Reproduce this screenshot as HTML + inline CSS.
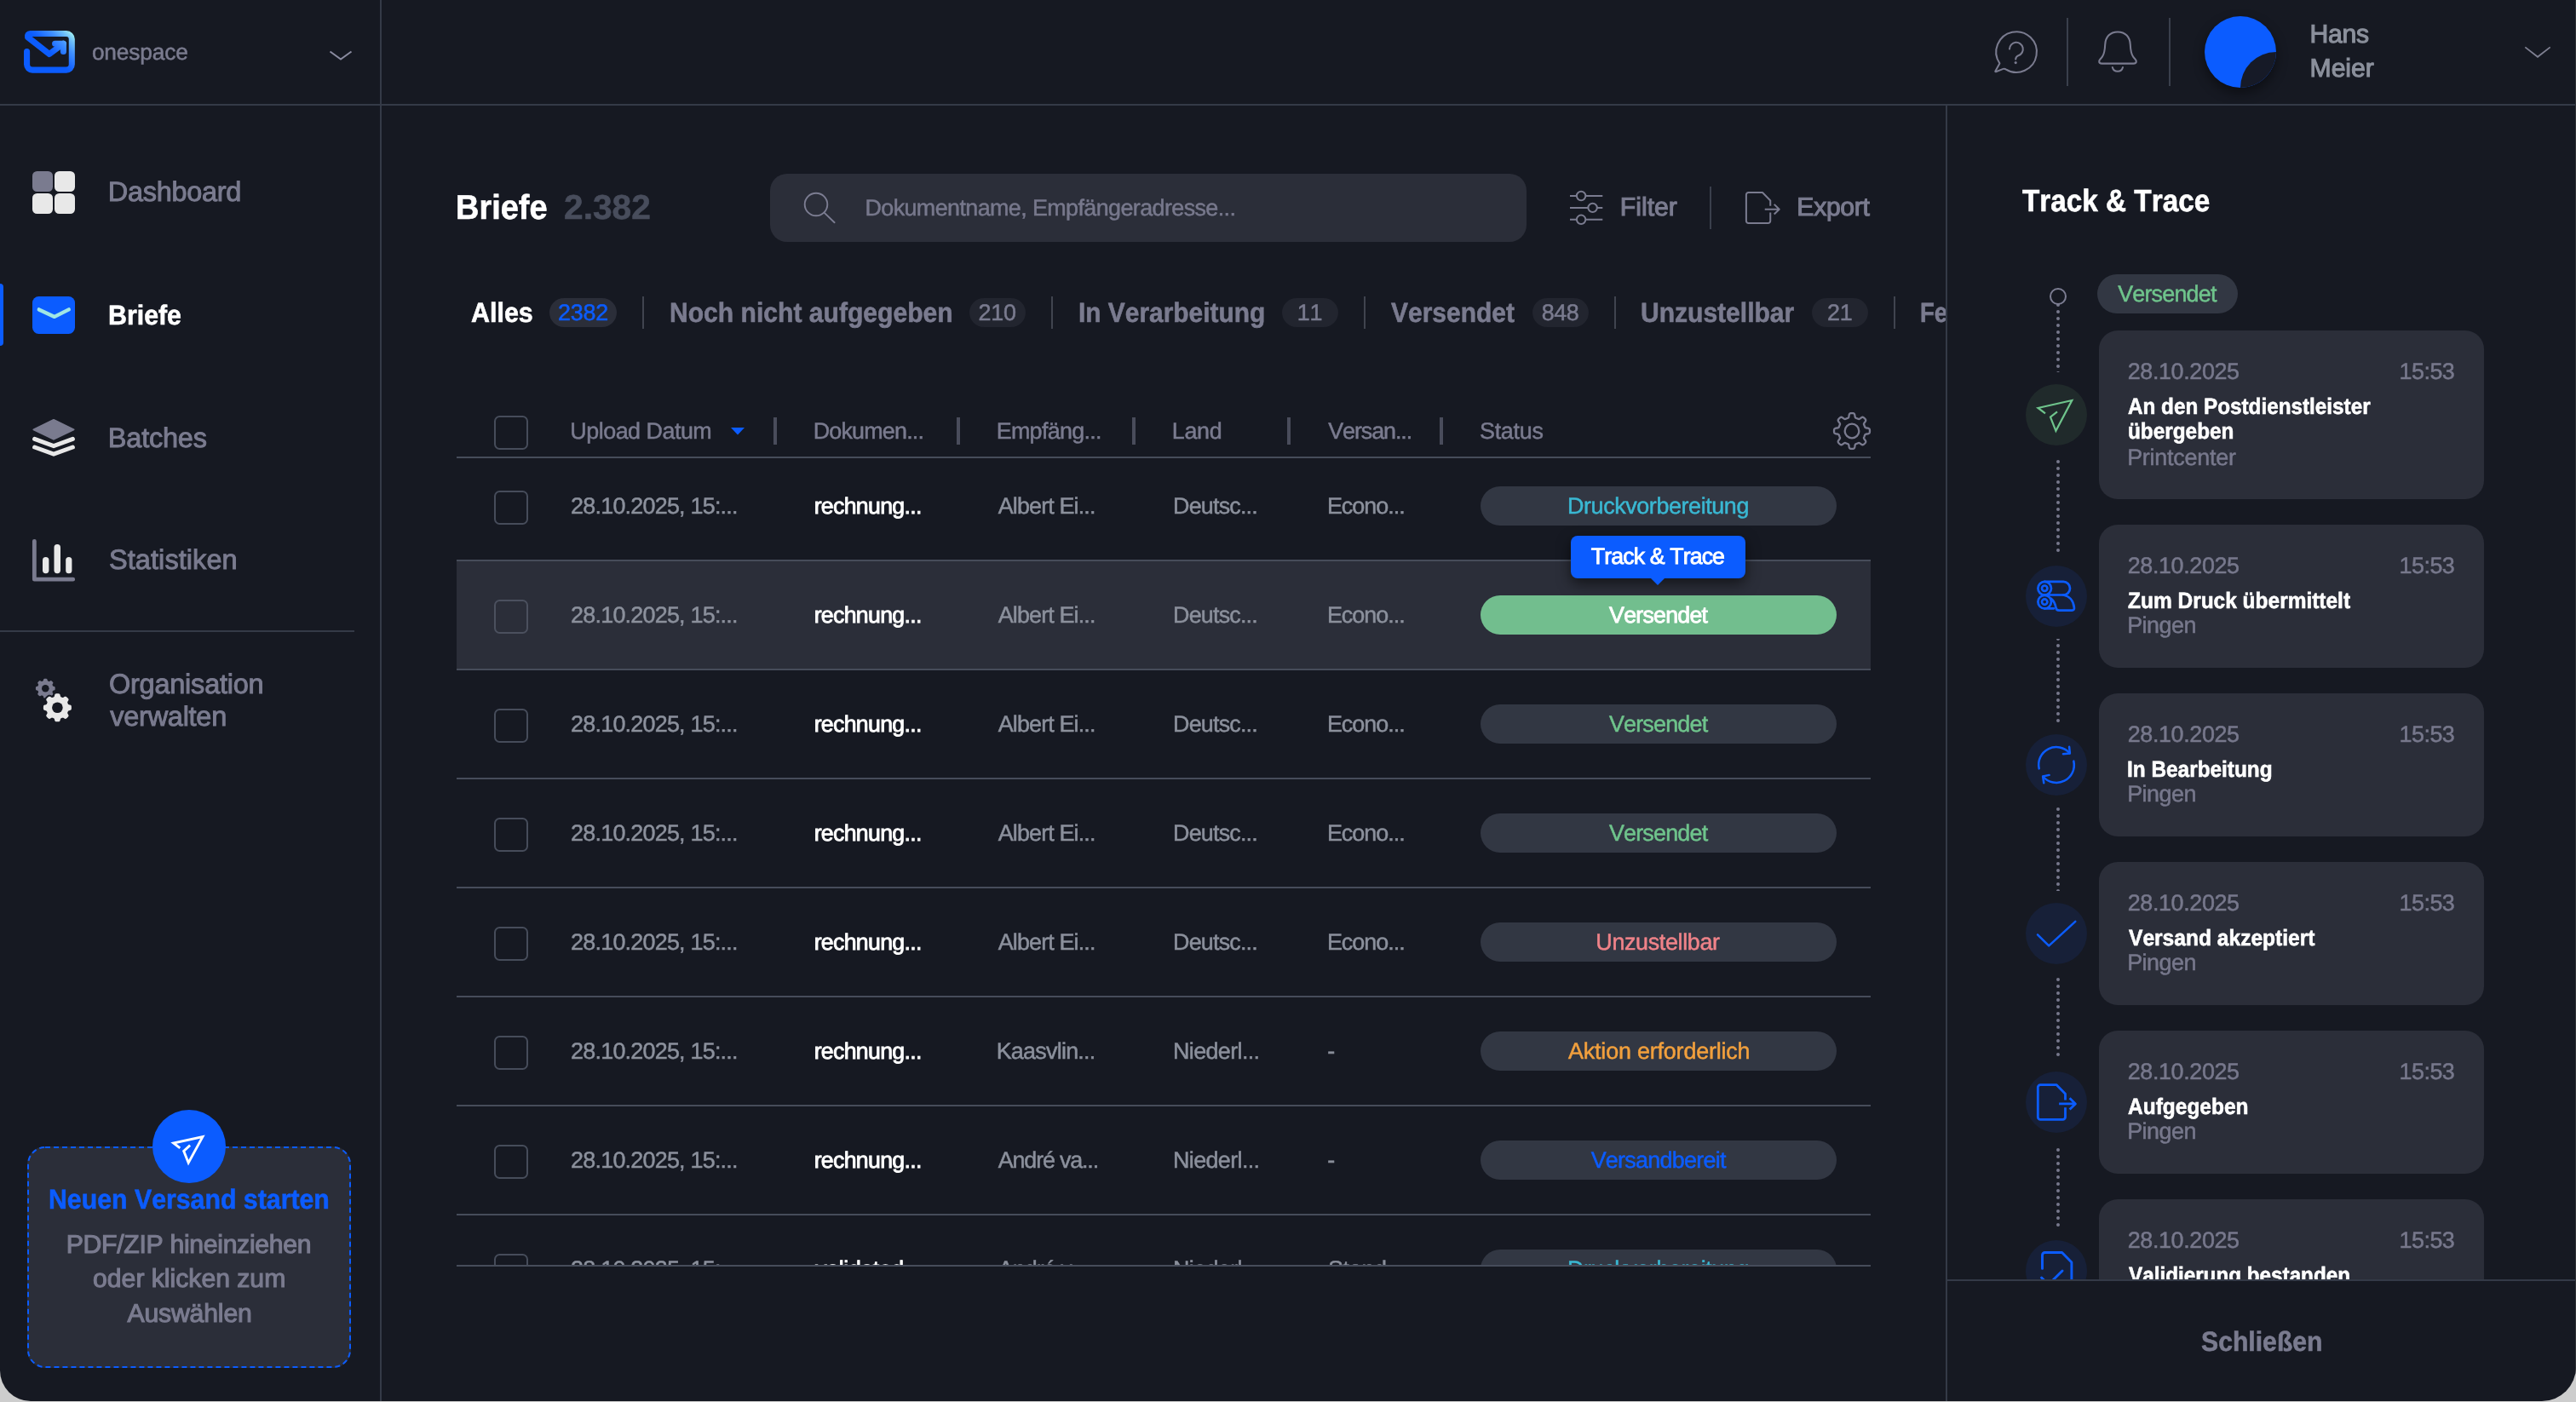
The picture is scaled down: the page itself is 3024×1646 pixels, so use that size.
<!DOCTYPE html>
<html lang="de"><head><meta charset="utf-8"><title>Briefe – Track &amp; Trace</title><style>
*{box-sizing:border-box;margin:0;padding:0}
html,body{width:3024px;height:1646px;overflow:hidden;background:#cdcdcd}
body{font-family:"Liberation Sans",sans-serif;font-kerning:none;text-rendering:geometricPrecision;-webkit-font-smoothing:antialiased}
div,span,svg,aside,header,main,section,nav,footer,ul,li,p,h1,h2,a,button{position:absolute;display:block}
.t{white-space:nowrap;line-height:1;font-weight:400;transform-origin:0 0}
.s5{-webkit-text-stroke:0.5px currentColor}
.s11{-webkit-text-stroke:1.1px currentColor}
.s9{-webkit-text-stroke:0.95px currentColor}
.b{font-weight:700;-webkit-text-stroke:0.6px currentColor}
.m{-webkit-text-stroke:0.85px currentColor}
svg{overflow:visible;fill:none}
.win{left:0;top:0;width:3024px;height:1645px;background:#161922;border-radius:0 0 40px 36px;overflow:hidden;will-change:transform}
.cb{border:2px solid #464c5a;border-radius:6.5px;width:40px;height:40px}
.pill{border-radius:23px;background:#323743;width:418px;height:46px}
.bdg{border-radius:17px;height:34px;top:350px;background:#22252f}
.vd{width:2px;background:#40444f}
.cd{width:4px;height:32px;top:490px;background:#494c5b}
.rl{left:0;width:1660px;height:2px;background:#464c5a}
.card{left:2464px;width:452px;border-radius:22px;background:#2b2e39}
.ic{width:72px;height:72px;border-radius:50%;left:2378px;background:#172038}
.mask{left:2404px;width:24px;height:100px;background:#161922}
</style></head>
<body><div class="win"><aside style="left:0;top:0;width:446px;height:1645px"><svg style="left:28px;top:36px" width="60" height="50" viewBox="0 0 60 50" ><defs><linearGradient id="lg" gradientUnits="userSpaceOnUse" x1="20" y1="36" x2="56.25" y2="-0.25"><stop offset="0.29" stop-color="#0b5cff"/><stop offset="0.39" stop-color="#1766ff"/><stop offset="0.65" stop-color="#4292ff"/><stop offset="0.83" stop-color="#6fc0f8"/><stop offset="0.95" stop-color="#9ae8f2"/></linearGradient></defs><g stroke="url(#lg)" stroke-width="7.1" stroke-linecap="round" stroke-linejoin="round"><path d="M3.55 24.5V39.6A6.5 6.5 0 0 0 10.05 46.1H49.8A6.5 6.5 0 0 0 56.3 39.6V10A6.5 6.5 0 0 0 49.8 3.5H7.6Q4 3.6 4.6 7.6L29.9 27.5L46.4 15.2"/><path d="M36.6 15.2H46.4V24.4"/></g></svg><span class="t s5" style="left:107.9px;top:48px;font-size:26.3px;color:#7a7b8f;letter-spacing:-0.16px">onespace</span><svg style="left:387px;top:60px" width="26" height="10" viewBox="0 0 26 10" ><path d="M0.5 0.5L13 9.5L25.5 0.5" stroke="#8a8ba0" stroke-width="2"/></svg><svg style="left:38px;top:201px" width="50" height="50" viewBox="0 0 50 50" ><rect width="24" height="24" rx="5.5" fill="#7a7b8f"/><rect x="26" width="24" height="24" rx="5.5" fill="#e8e8e8"/><rect y="26" width="24" height="24" rx="5.5" fill="#e8e8e8"/><rect x="26" y="26" width="24" height="24" rx="5.5" fill="#e8e8e8"/></svg><span class="t s9" style="left:126.81px;top:209px;font-size:32.5px;color:#7a7b8f;letter-spacing:-0.31px">Dashboard</span><div style="left:0px;top:333px;width:4px;height:73px;background:#0b5cff;border-radius:0 4px 4px 0"></div><svg style="left:38px;top:348px" width="50" height="44" viewBox="0 0 50 44" ><rect width="50" height="44" rx="7.5" fill="#0b5cff"/><path d="M7.8 15.4L26 23.9L42.8 15.4" stroke="#a0e6e4" stroke-width="4.4" stroke-linecap="round" stroke-linejoin="round"/></svg><span class="t b" style="left:127.25px;top:354px;font-size:32.4px;color:#fff;transform:scaleX(0.9365)">Briefe</span><svg style="left:38px;top:492px" width="50" height="45" viewBox="0 0 50 45" ><path d="M25 1L48.5 12.3L25 23.7L1.5 12.3Z" fill="#7a7b8f" stroke="#7a7b8f" stroke-width="2" stroke-linejoin="round"/><path d="M2.6 23.4L25 31.5L47.4 23.4M2.6 33L25 41.1L47.4 33" stroke="#e8e8e8" stroke-width="5" stroke-linecap="round" stroke-linejoin="miter"/></svg><span class="t s9" style="left:126.81px;top:498px;font-size:32.5px;color:#7a7b8f;letter-spacing:-0.21px">Batches</span><svg style="left:38px;top:633px" width="50" height="50" viewBox="0 0 50 50" ><path d="M2.35 2.3V47.2H47.7" stroke="#7a7b8f" stroke-width="4.8" stroke-linecap="round" stroke-linejoin="round"/><rect x="12" y="21" width="7.4" height="19.3" rx="3.7" fill="#e8e8e8"/><rect x="25.5" y="6" width="7.5" height="34.3" rx="3.7" fill="#e8e8e8"/><rect x="39.2" y="21" width="7.2" height="19.3" rx="3.6" fill="#e8e8e8"/></svg><span class="t s9" style="left:128px;top:641px;font-size:32.5px;color:#7a7b8f;letter-spacing:0.07px">Statistiken</span><div style="left:0px;top:740px;width:416px;height:2px;background:#343a47"></div><svg style="left:38px;top:796px" width="50" height="54" viewBox="0 0 50 54" ><path d="M15.3 0.8L15.52 0.8L15.75 0.81L15.97 0.82L16.19 0.84L16.42 0.87L16.64 0.92L16.85 0.99L17.06 1.1L17.25 1.29L17.41 1.6L17.53 2.02L17.64 2.47L17.74 2.85L17.86 3.12L18 3.3L18.15 3.43L18.31 3.52L18.47 3.61L18.63 3.68L18.8 3.75L18.97 3.82L19.14 3.88L19.31 3.94L19.49 3.98L19.68 4L19.91 3.97L20.19 3.87L20.53 3.67L20.92 3.42L21.31 3.21L21.64 3.11L21.91 3.11L22.13 3.18L22.33 3.28L22.52 3.4L22.7 3.54L22.87 3.68L23.04 3.83L23.2 3.98L23.36 4.14L23.52 4.3L23.67 4.46L23.82 4.63L23.96 4.8L24.1 4.98L24.22 5.17L24.32 5.37L24.39 5.59L24.39 5.86L24.29 6.19L24.08 6.58L23.83 6.97L23.63 7.31L23.53 7.59L23.5 7.82L23.52 8.01L23.56 8.19L23.62 8.36L23.68 8.53L23.75 8.7L23.82 8.87L23.89 9.03L23.98 9.19L24.07 9.35L24.2 9.5L24.38 9.64L24.65 9.76L25.03 9.86L25.48 9.97L25.9 10.09L26.21 10.25L26.4 10.44L26.51 10.65L26.58 10.86L26.63 11.08L26.66 11.31L26.68 11.53L26.69 11.75L26.7 11.98L26.7 12.2L26.7 12.42L26.69 12.65L26.68 12.87L26.66 13.09L26.63 13.32L26.58 13.54L26.51 13.75L26.4 13.96L26.21 14.15L25.9 14.31L25.48 14.43L25.03 14.54L24.65 14.64L24.38 14.76L24.2 14.9L24.07 15.05L23.98 15.21L23.89 15.37L23.82 15.53L23.75 15.7L23.68 15.87L23.62 16.04L23.56 16.21L23.52 16.39L23.5 16.58L23.53 16.81L23.63 17.09L23.83 17.43L24.08 17.82L24.29 18.21L24.39 18.54L24.39 18.81L24.32 19.03L24.22 19.23L24.1 19.42L23.96 19.6L23.82 19.77L23.67 19.94L23.52 20.1L23.36 20.26L23.2 20.42L23.04 20.57L22.87 20.72L22.7 20.86L22.52 21L22.33 21.12L22.13 21.22L21.91 21.29L21.64 21.29L21.31 21.19L20.92 20.98L20.53 20.73L20.19 20.53L19.91 20.43L19.68 20.4L19.49 20.42L19.31 20.46L19.14 20.52L18.97 20.58L18.8 20.65L18.63 20.72L18.47 20.79L18.31 20.88L18.15 20.97L18 21.1L17.86 21.28L17.74 21.55L17.64 21.93L17.53 22.38L17.41 22.8L17.25 23.11L17.06 23.3L16.85 23.41L16.64 23.48L16.42 23.53L16.19 23.56L15.97 23.58L15.75 23.59L15.52 23.6L15.3 23.6L15.08 23.6L14.85 23.59L14.63 23.58L14.41 23.56L14.18 23.53L13.96 23.48L13.75 23.41L13.54 23.3L13.35 23.11L13.19 22.8L13.07 22.38L12.96 21.93L12.86 21.55L12.74 21.28L12.6 21.1L12.45 20.97L12.29 20.88L12.13 20.79L11.97 20.72L11.8 20.65L11.63 20.58L11.46 20.52L11.29 20.46L11.11 20.42L10.92 20.4L10.69 20.43L10.41 20.53L10.07 20.73L9.68 20.98L9.29 21.19L8.96 21.29L8.69 21.29L8.47 21.22L8.27 21.12L8.08 21L7.9 20.86L7.73 20.72L7.56 20.57L7.4 20.42L7.24 20.26L7.08 20.1L6.93 19.94L6.78 19.77L6.64 19.6L6.5 19.42L6.38 19.23L6.28 19.03L6.21 18.81L6.21 18.54L6.31 18.21L6.52 17.82L6.77 17.43L6.97 17.09L7.07 16.81L7.1 16.58L7.08 16.39L7.04 16.21L6.98 16.04L6.92 15.87L6.85 15.7L6.78 15.53L6.71 15.37L6.62 15.21L6.53 15.05L6.4 14.9L6.22 14.76L5.95 14.64L5.57 14.54L5.12 14.43L4.7 14.31L4.39 14.15L4.2 13.96L4.09 13.75L4.02 13.54L3.97 13.32L3.94 13.09L3.92 12.87L3.91 12.65L3.9 12.42L3.9 12.2L3.9 11.98L3.91 11.75L3.92 11.53L3.94 11.31L3.97 11.08L4.02 10.86L4.09 10.65L4.2 10.44L4.39 10.25L4.7 10.09L5.12 9.97L5.57 9.86L5.95 9.76L6.22 9.64L6.4 9.5L6.53 9.35L6.62 9.19L6.71 9.03L6.78 8.87L6.85 8.7L6.92 8.53L6.98 8.36L7.04 8.19L7.08 8.01L7.1 7.82L7.07 7.59L6.97 7.31L6.77 6.97L6.52 6.58L6.31 6.19L6.21 5.86L6.21 5.59L6.28 5.37L6.38 5.17L6.5 4.98L6.64 4.8L6.78 4.63L6.93 4.46L7.08 4.3L7.24 4.14L7.4 3.98L7.56 3.83L7.73 3.68L7.9 3.54L8.08 3.4L8.27 3.28L8.47 3.18L8.69 3.11L8.96 3.11L9.29 3.21L9.68 3.42L10.07 3.67L10.41 3.87L10.69 3.97L10.92 4L11.11 3.98L11.29 3.94L11.46 3.88L11.63 3.82L11.8 3.75L11.97 3.68L12.13 3.61L12.29 3.52L12.45 3.43L12.6 3.3L12.74 3.12L12.86 2.85L12.96 2.47L13.07 2.02L13.19 1.6L13.35 1.29L13.54 1.1L13.75 0.99L13.96 0.92L14.18 0.87L14.41 0.84L14.63 0.82L14.85 0.81L15.08 0.8Z" fill="#7a7b8f"/><circle cx="15.3" cy="12.2" r="4.3" fill="#161922"/><path d="M29.4 18.3L29.72 18.3L30.05 18.32L30.37 18.34L30.69 18.37L31.01 18.41L31.33 18.47L31.64 18.57L31.94 18.74L32.22 19.02L32.45 19.47L32.63 20.09L32.77 20.76L32.92 21.32L33.09 21.72L33.29 21.99L33.5 22.17L33.73 22.31L33.97 22.43L34.2 22.53L34.44 22.63L34.68 22.73L34.92 22.82L35.17 22.9L35.43 22.97L35.71 22.99L36.04 22.94L36.44 22.78L36.94 22.49L37.52 22.12L38.08 21.81L38.56 21.65L38.96 21.65L39.29 21.74L39.58 21.89L39.85 22.07L40.11 22.26L40.36 22.47L40.6 22.69L40.84 22.91L41.07 23.13L41.29 23.36L41.51 23.6L41.73 23.84L41.94 24.09L42.13 24.35L42.31 24.62L42.46 24.91L42.55 25.24L42.55 25.64L42.39 26.12L42.08 26.68L41.71 27.26L41.42 27.76L41.26 28.16L41.21 28.49L41.23 28.77L41.3 29.03L41.38 29.28L41.47 29.52L41.57 29.76L41.67 30L41.77 30.23L41.89 30.47L42.03 30.7L42.21 30.91L42.48 31.11L42.88 31.28L43.44 31.43L44.11 31.57L44.73 31.75L45.18 31.98L45.46 32.26L45.63 32.56L45.73 32.87L45.79 33.19L45.83 33.51L45.86 33.83L45.88 34.15L45.9 34.48L45.9 34.8L45.9 35.12L45.88 35.45L45.86 35.77L45.83 36.09L45.79 36.41L45.73 36.73L45.63 37.04L45.46 37.34L45.18 37.62L44.73 37.85L44.11 38.03L43.44 38.17L42.88 38.32L42.48 38.49L42.21 38.69L42.03 38.9L41.89 39.13L41.77 39.37L41.67 39.6L41.57 39.84L41.47 40.08L41.38 40.32L41.3 40.57L41.23 40.83L41.21 41.11L41.26 41.44L41.42 41.84L41.71 42.34L42.08 42.92L42.39 43.48L42.55 43.96L42.55 44.36L42.46 44.69L42.31 44.98L42.13 45.25L41.94 45.51L41.73 45.76L41.51 46L41.29 46.24L41.07 46.47L40.84 46.69L40.6 46.91L40.36 47.13L40.11 47.34L39.85 47.53L39.58 47.71L39.29 47.86L38.96 47.95L38.56 47.95L38.08 47.79L37.52 47.48L36.94 47.11L36.44 46.82L36.04 46.66L35.71 46.61L35.43 46.63L35.17 46.7L34.92 46.78L34.68 46.87L34.44 46.97L34.2 47.07L33.97 47.17L33.73 47.29L33.5 47.43L33.29 47.61L33.09 47.88L32.92 48.28L32.77 48.84L32.63 49.51L32.45 50.13L32.22 50.58L31.94 50.86L31.64 51.03L31.33 51.13L31.01 51.19L30.69 51.23L30.37 51.26L30.05 51.28L29.72 51.3L29.4 51.3L29.08 51.3L28.75 51.28L28.43 51.26L28.11 51.23L27.79 51.19L27.47 51.13L27.16 51.03L26.86 50.86L26.58 50.58L26.35 50.13L26.17 49.51L26.03 48.84L25.88 48.28L25.71 47.88L25.51 47.61L25.3 47.43L25.07 47.29L24.83 47.17L24.6 47.07L24.36 46.97L24.12 46.87L23.88 46.78L23.63 46.7L23.37 46.63L23.09 46.61L22.76 46.66L22.36 46.82L21.86 47.11L21.28 47.48L20.72 47.79L20.24 47.95L19.84 47.95L19.51 47.86L19.22 47.71L18.95 47.53L18.69 47.34L18.44 47.13L18.2 46.91L17.96 46.69L17.73 46.47L17.51 46.24L17.29 46L17.07 45.76L16.86 45.51L16.67 45.25L16.49 44.98L16.34 44.69L16.25 44.36L16.25 43.96L16.41 43.48L16.72 42.92L17.09 42.34L17.38 41.84L17.54 41.44L17.59 41.11L17.57 40.83L17.5 40.57L17.42 40.32L17.33 40.08L17.23 39.84L17.13 39.6L17.03 39.37L16.91 39.13L16.77 38.9L16.59 38.69L16.32 38.49L15.92 38.32L15.36 38.17L14.69 38.03L14.07 37.85L13.62 37.62L13.34 37.34L13.17 37.04L13.07 36.73L13.01 36.41L12.97 36.09L12.94 35.77L12.92 35.45L12.9 35.12L12.9 34.8L12.9 34.48L12.92 34.15L12.94 33.83L12.97 33.51L13.01 33.19L13.07 32.87L13.17 32.56L13.34 32.26L13.62 31.98L14.07 31.75L14.69 31.57L15.36 31.43L15.92 31.28L16.32 31.11L16.59 30.91L16.77 30.7L16.91 30.47L17.03 30.23L17.13 30L17.23 29.76L17.33 29.52L17.42 29.28L17.5 29.03L17.57 28.77L17.59 28.49L17.54 28.16L17.38 27.76L17.09 27.26L16.72 26.68L16.41 26.12L16.25 25.64L16.25 25.24L16.34 24.91L16.49 24.62L16.67 24.35L16.86 24.09L17.07 23.84L17.29 23.6L17.51 23.36L17.73 23.13L17.96 22.91L18.2 22.69L18.44 22.47L18.69 22.26L18.95 22.07L19.22 21.89L19.51 21.74L19.84 21.65L20.24 21.65L20.72 21.81L21.28 22.12L21.86 22.49L22.36 22.78L22.76 22.94L23.09 22.99L23.37 22.97L23.63 22.9L23.88 22.82L24.12 22.73L24.36 22.63L24.6 22.53L24.83 22.43L25.07 22.31L25.3 22.17L25.51 21.99L25.71 21.72L25.88 21.32L26.03 20.76L26.17 20.09L26.35 19.47L26.58 19.02L26.86 18.74L27.16 18.57L27.47 18.47L27.79 18.41L28.11 18.37L28.43 18.34L28.75 18.32L29.08 18.3Z" fill="#e8e8e8" stroke="#161922" stroke-width="4" stroke-linejoin="round" paint-order="stroke"/><circle cx="29.4" cy="34.8" r="6.3" fill="#161922"/></svg><span class="t s9" style="left:127.94px;top:787px;font-size:32.5px;color:#7a7b8f;letter-spacing:-0.23px">Organisation</span><span class="t s9" style="left:129.36px;top:825px;font-size:32.5px;color:#7a7b8f;letter-spacing:-0.28px">verwalten</span><div style="left:32px;top:1346px;width:380px;height:260px;background:#2b2e39;border-radius:21px"></div><svg style="left:32px;top:1346px" width="380" height="260" viewBox="0 0 380 260" ><rect x="1" y="1" width="378" height="258" rx="20" stroke="#0b5cff" stroke-width="2" stroke-dasharray="6 4"/></svg><div style="left:179px;top:1303px;width:86px;height:86px;background:#0b5cff;border-radius:50%"></div><svg style="left:222px;top:1346px" width="1" height="1" viewBox="0 0 1 1" ><path d="M-10.7 1.8L-18.3 -4L15.9 -11.3L-0.8 19.2L-6.3 5.3L1.1 -1.3" stroke="#fff" stroke-width="2.9" stroke-linejoin="miter" stroke-miterlimit="10"/></svg><span class="t b" style="left:57.25px;top:1392px;font-size:32.4px;color:#0b5cff;transform:scaleX(0.9349)">Neuen Versand starten</span><span class="t s11" style="left:77.77px;top:1447px;font-size:30.2px;color:#7a7b8f;letter-spacing:-0.31px">PDF/ZIP hineinziehen</span><span class="t s11" style="left:109.08px;top:1487px;font-size:30.2px;color:#7a7b8f;letter-spacing:-0.02px">oder klicken zum</span><span class="t s11" style="left:149.49px;top:1528px;font-size:30.2px;color:#7a7b8f;letter-spacing:-0.17px">Auswählen</span></aside><header style="left:0;top:0;width:3023px;height:122px"><svg style="left:2366.5px;top:61px" width="1" height="1" viewBox="0 0 1 1" ><g stroke="#7a7b8f" stroke-width="2.05" stroke-linecap="round" stroke-linejoin="round"><path d="M-19.6 13.4A23.8 23.8 0 1 1 -12.4 20.3Q-13.8 19.3 -15.4 19.9L-24 23.2Q-25 23.5 -24.6 22.5Z"/><path d="M-8 -3.4A7.9 7.9 0 1 1 2.4 4.2Q-0.8 5.8 -0.8 8.6"/></g><circle cx="-0.8" cy="12.6" r="1.55" fill="#7a7b8f"/></svg><div style="left:2426px;top:21px;width:2px;height:80px;background:#3a3f4c"></div><svg style="left:2486.3px;top:61px" width="1" height="1" viewBox="0 0 1 1" ><g stroke="#7a7b8f" stroke-width="2.05" stroke-linecap="round" stroke-linejoin="round"><path d="M0 -23.6C-9 -23.6 -14.4 -17.6 -14.8 -8.5C-15.1 -1.5 -15.6 1.8 -18 5.4C-19.9 8.2 -21.8 9.2 -21.8 10.9C-21.8 12.7 -20.4 13.6 -18.4 13.6H18.4C20.4 13.6 21.8 12.7 21.8 10.9C21.8 9.2 19.9 8.2 18 5.4C15.6 1.8 15.1 -1.5 14.8 -8.5C14.4 -17.6 9 -23.6 0 -23.6Z"/><path d="M-6.2 18A6.3 6.4 0 0 0 6 18"/></g></svg><div style="left:2546px;top:21px;width:2px;height:80px;background:#3a3f4c"></div><div style="left:2588px;top:19px;width:84px;height:84px;border-radius:50%;background:#0b5cff;overflow:hidden;box-shadow:0 6px 14px rgba(0,0,0,.45)"><div style="left:42px;top:42px;width:84px;height:84px;border-radius:50%;background:#161a27"></div></div><span class="t s11" style="left:2711.57px;top:26px;font-size:30.2px;color:#8b909c;letter-spacing:-0.34px">Hans</span><span class="t s11" style="left:2711.57px;top:66px;font-size:30.2px;color:#8b909c;letter-spacing:-0.08px">Meier</span><svg style="left:2964px;top:55px" width="30" height="12" viewBox="0 0 30 12" ><path d="M0.3 0.4L15 11.8L29.7 0.4" stroke="#7f8092" stroke-width="1.8"/></svg></header><main style="left:448px;top:124px;width:1836px;height:1521px;overflow:hidden"><div style="left:-448px;top:-124px;width:3023px;height:1645px"><span class="t b" style="left:535.14px;top:223px;font-size:40.4px;color:#fff;transform:scaleX(0.9394)">Briefe</span><span class="t b" style="left:662.39px;top:223px;font-size:40.4px;color:#484d5c;transform:scaleX(1.0083)">2.382</span><div style="left:904px;top:204px;width:888px;height:80px;background:#2b2e39;border-radius:20px"></div><svg style="left:958px;top:240px" width="1" height="1" viewBox="0 0 1 1" ><g stroke="#7c7d92" stroke-width="1.9" stroke-linecap="round"><circle r="13.3"/><path d="M9.5 9.6L21.6 21.2"/></g></svg><span class="t s5" style="left:1015.44px;top:231px;font-size:26.9px;color:#77788c;letter-spacing:-0.59px">Dokumentname, Empfängeradresse...</span><svg style="left:1842.6px;top:230px" width="1" height="1" viewBox="0 0 1 1" ><g stroke="#7a7b8f" stroke-width="2"><path d="M0 0H7.9M18.3 0H38.3M0 13.9H21.4M31.8 13.9H38.3M0 27.8H7.9M18.3 27.8H38.3"/><circle cx="13.1" cy="0" r="5.2"/><circle cx="26.6" cy="13.9" r="5.2"/><circle cx="13.1" cy="27.8" r="5.2"/></g></svg><span class="t s11" style="left:1901.87px;top:229px;font-size:30.2px;color:#7a7b8f;letter-spacing:-0.01px">Filter</span><div style="left:2007px;top:219px;width:2px;height:50px;background:#3a3f4c"></div><svg style="left:2069px;top:243.7px" width="1" height="1" viewBox="0 0 1 1" ><g transform="scale(0.88)" stroke="#7a7b8f" stroke-width="2.3" stroke-linejoin="round" stroke-linecap="butt"><path d="M10.5 -2.5V-9.7L0 -20.4H-18.7A3 3 0 0 0 -21.7 -17.4V17.4A3 3 0 0 0 -18.7 20.4H7.5A3 3 0 0 0 10.5 17.4V6.3"/><path d="M3.1 1.9H22M15.6 -4.7L22.4 1.9L15.6 8.5"/></g></svg><span class="t s11" style="left:2109.37px;top:229px;font-size:30.2px;color:#7a7b8f;letter-spacing:-0.34px">Export</span><span class="t b" style="left:553.02px;top:351px;font-size:32.4px;color:#fff;transform:scaleX(0.9393)">Alles</span><div class="bdg" style="left:645px;top:350px;width:79px;height:34px;background:#2b2e39"></div><span class="t s5" style="left:654.9px;top:354px;font-size:26.9px;color:#0b5cff;letter-spacing:-0.21px">2382</span><span class="t b" style="left:785.67px;top:351px;font-size:32.4px;color:#7a7b8f;transform:scaleX(0.9288)">Noch nicht aufgegeben</span><div class="bdg" style="left:1138px;top:350px;width:65.7px;height:34px;"></div><span class="t s5" style="left:1148.4px;top:354px;font-size:26.9px;color:#7a7b8f;letter-spacing:-0.14px">210</span><span class="t b" style="left:1265.88px;top:351px;font-size:32.4px;color:#7a7b8f;transform:scaleX(0.9226)">In Verarbeitung</span><div class="bdg" style="left:1505px;top:350px;width:66px;height:34px;"></div><span class="t s5" style="left:1522.67px;top:354px;font-size:26.9px;color:#7a7b8f">11</span><span class="t b" style="left:1633.37px;top:351px;font-size:32.4px;color:#7a7b8f;transform:scaleX(0.925)">Versendet</span><div class="bdg" style="left:1799px;top:350px;width:65.6px;height:34px;"></div><span class="t s5" style="left:1809.83px;top:354px;font-size:26.9px;color:#7a7b8f;letter-spacing:-0.47px">848</span><span class="t b" style="left:1926.07px;top:351px;font-size:32.4px;color:#7a7b8f;transform:scaleX(0.9273)">Unzustellbar</span><div class="bdg" style="left:2127px;top:350px;width:65.8px;height:34px;"></div><span class="t s5" style="left:2144.92px;top:354px;font-size:26.9px;color:#7a7b8f">21</span><div class="vd" style="left:754px;top:348px;width:2px;height:38px;"></div><div class="vd" style="left:1234px;top:348px;width:2px;height:38px;"></div><div class="vd" style="left:1601px;top:348px;width:2px;height:38px;"></div><div class="vd" style="left:1895px;top:348px;width:2px;height:38px;"></div><div class="vd" style="left:2223px;top:348px;width:2px;height:38px;"></div><span class="t b" style="left:2254.11px;top:351px;font-size:32.4px;color:#7a7b8f;transform:scaleX(0.8496)">Fehlgeschlagen</span><div class="cb" style="left:580px;top:488px;width:40px;height:40px;"></div><span class="t s5" style="left:669.37px;top:493px;font-size:26.9px;color:#7a7b8f;letter-spacing:-0.5px">Upload Datum</span><svg style="left:858px;top:502px" width="16" height="9" viewBox="0 0 16 9" ><path d="M0 0H16L8 8.5Z" fill="#0b5cff"/></svg><span class="t s5" style="left:954.74px;top:493px;font-size:26.9px;color:#7a7b8f;letter-spacing:-0.81px">Dokumen...</span><span class="t s5" style="left:1169.64px;top:493px;font-size:26.9px;color:#7a7b8f;letter-spacing:-0.68px">Empfäng...</span><span class="t s5" style="left:1375.74px;top:493px;font-size:26.9px;color:#7a7b8f;letter-spacing:-0.3px">Land</span><span class="t s5" style="left:1559.13px;top:493px;font-size:26.9px;color:#7a7b8f;letter-spacing:-1.07px">Versan...</span><span class="t s5" style="left:1736.93px;top:493px;font-size:26.9px;color:#7a7b8f;letter-spacing:-0.23px">Status</span><div class="cd" style="left:908px;top:490px;width:4px;height:32px;"></div><div class="cd" style="left:1123px;top:490px;width:4px;height:32px;"></div><div class="cd" style="left:1329px;top:490px;width:4px;height:32px;"></div><div class="cd" style="left:1510.5px;top:490px;width:4px;height:32px;"></div><div class="cd" style="left:1690px;top:490px;width:4px;height:32px;"></div><svg style="left:2174px;top:506px" width="1" height="1" viewBox="0 0 1 1" ><g stroke="#7a7b8f" stroke-width="2.3" stroke-linejoin="round"><path d="M0 -20.98L0.41 -20.97L0.82 -20.95L1.23 -20.91L1.64 -20.84L2.04 -20.73L2.43 -20.53L2.79 -20.18L3.1 -19.58L3.33 -18.66L3.5 -17.58L3.65 -16.65L3.85 -16.03L4.09 -15.66L4.35 -15.43L4.63 -15.28L4.92 -15.15L5.21 -15.04L5.51 -14.92L5.8 -14.81L6.08 -14.69L6.37 -14.57L6.66 -14.44L6.95 -14.32L7.23 -14.19L7.53 -14.08L7.84 -13.99L8.18 -13.96L8.61 -14.05L9.19 -14.35L9.96 -14.9L10.84 -15.55L11.65 -16.04L12.3 -16.25L12.8 -16.24L13.21 -16.1L13.58 -15.9L13.91 -15.66L14.23 -15.39L14.54 -15.12L14.83 -14.83L15.12 -14.54L15.39 -14.23L15.66 -13.91L15.9 -13.58L16.1 -13.21L16.24 -12.8L16.25 -12.3L16.04 -11.65L15.55 -10.84L14.9 -9.96L14.35 -9.19L14.05 -8.61L13.96 -8.18L13.99 -7.84L14.08 -7.53L14.19 -7.23L14.32 -6.95L14.44 -6.66L14.57 -6.37L14.69 -6.08L14.81 -5.8L14.92 -5.51L15.04 -5.21L15.15 -4.92L15.28 -4.63L15.43 -4.35L15.66 -4.09L16.03 -3.85L16.65 -3.65L17.58 -3.5L18.66 -3.33L19.58 -3.1L20.18 -2.79L20.53 -2.43L20.73 -2.04L20.84 -1.64L20.91 -1.23L20.95 -0.82L20.97 -0.41L20.98 0L20.97 0.41L20.95 0.82L20.91 1.23L20.84 1.64L20.73 2.04L20.53 2.43L20.18 2.79L19.58 3.1L18.66 3.33L17.58 3.5L16.65 3.65L16.03 3.85L15.66 4.09L15.43 4.35L15.28 4.63L15.15 4.92L15.04 5.21L14.92 5.51L14.81 5.8L14.69 6.08L14.57 6.37L14.44 6.66L14.32 6.95L14.19 7.23L14.08 7.53L13.99 7.84L13.96 8.18L14.05 8.61L14.35 9.19L14.9 9.96L15.55 10.84L16.04 11.65L16.25 12.3L16.24 12.8L16.1 13.21L15.9 13.58L15.66 13.91L15.39 14.23L15.12 14.54L14.83 14.83L14.54 15.12L14.23 15.39L13.91 15.66L13.58 15.9L13.21 16.1L12.8 16.24L12.3 16.25L11.65 16.04L10.84 15.55L9.96 14.9L9.19 14.35L8.61 14.05L8.18 13.96L7.84 13.99L7.53 14.08L7.23 14.19L6.95 14.32L6.66 14.44L6.37 14.57L6.08 14.69L5.8 14.81L5.51 14.92L5.21 15.04L4.92 15.15L4.63 15.28L4.35 15.43L4.09 15.66L3.85 16.03L3.65 16.65L3.5 17.58L3.33 18.66L3.1 19.58L2.79 20.18L2.43 20.53L2.04 20.73L1.64 20.84L1.23 20.91L0.82 20.95L0.41 20.97L0 20.98L-0.41 20.97L-0.82 20.95L-1.23 20.91L-1.64 20.84L-2.04 20.73L-2.43 20.53L-2.79 20.18L-3.1 19.58L-3.33 18.66L-3.5 17.58L-3.65 16.65L-3.85 16.03L-4.09 15.66L-4.35 15.43L-4.63 15.28L-4.92 15.15L-5.21 15.04L-5.51 14.92L-5.8 14.81L-6.08 14.69L-6.37 14.57L-6.66 14.44L-6.95 14.32L-7.23 14.19L-7.53 14.08L-7.84 13.99L-8.18 13.96L-8.61 14.05L-9.19 14.35L-9.96 14.9L-10.84 15.55L-11.65 16.04L-12.3 16.25L-12.8 16.24L-13.21 16.1L-13.58 15.9L-13.91 15.66L-14.23 15.39L-14.54 15.12L-14.83 14.83L-15.12 14.54L-15.39 14.23L-15.66 13.91L-15.9 13.58L-16.1 13.21L-16.24 12.8L-16.25 12.3L-16.04 11.65L-15.55 10.84L-14.9 9.96L-14.35 9.19L-14.05 8.61L-13.96 8.18L-13.99 7.84L-14.08 7.53L-14.19 7.23L-14.32 6.95L-14.44 6.66L-14.57 6.37L-14.69 6.08L-14.81 5.8L-14.92 5.51L-15.04 5.21L-15.15 4.92L-15.28 4.63L-15.43 4.35L-15.66 4.09L-16.03 3.85L-16.65 3.65L-17.58 3.5L-18.66 3.33L-19.58 3.1L-20.18 2.79L-20.53 2.43L-20.73 2.04L-20.84 1.64L-20.91 1.23L-20.95 0.82L-20.97 0.41L-20.98 0L-20.97 -0.41L-20.95 -0.82L-20.91 -1.23L-20.84 -1.64L-20.73 -2.04L-20.53 -2.43L-20.18 -2.79L-19.58 -3.1L-18.66 -3.33L-17.58 -3.5L-16.65 -3.65L-16.03 -3.85L-15.66 -4.09L-15.43 -4.35L-15.28 -4.63L-15.15 -4.92L-15.04 -5.21L-14.92 -5.51L-14.81 -5.8L-14.69 -6.08L-14.57 -6.37L-14.44 -6.66L-14.32 -6.95L-14.19 -7.23L-14.08 -7.53L-13.99 -7.84L-13.96 -8.18L-14.05 -8.61L-14.35 -9.19L-14.9 -9.96L-15.55 -10.84L-16.04 -11.65L-16.25 -12.3L-16.24 -12.8L-16.1 -13.21L-15.9 -13.58L-15.66 -13.91L-15.39 -14.23L-15.12 -14.54L-14.83 -14.83L-14.54 -15.12L-14.23 -15.39L-13.91 -15.66L-13.58 -15.9L-13.21 -16.1L-12.8 -16.24L-12.3 -16.25L-11.65 -16.04L-10.84 -15.55L-9.96 -14.9L-9.19 -14.35L-8.61 -14.05L-8.18 -13.96L-7.84 -13.99L-7.53 -14.08L-7.23 -14.19L-6.95 -14.32L-6.66 -14.44L-6.37 -14.57L-6.08 -14.69L-5.8 -14.81L-5.51 -14.92L-5.21 -15.04L-4.92 -15.15L-4.63 -15.28L-4.35 -15.43L-4.09 -15.66L-3.85 -16.03L-3.65 -16.65L-3.5 -17.58L-3.33 -18.66L-3.1 -19.58L-2.79 -20.18L-2.43 -20.53L-2.04 -20.73L-1.64 -20.84L-1.23 -20.91L-0.82 -20.95L-0.41 -20.97Z"/><circle r="8.3"/></g></svg><div style="left:536px;top:536px;width:1660px;height:2px;background:#464c5a"></div><div style="left:536px;top:538px;width:1660px;height:947px;overflow:hidden"><div class="rl" style="left:0px;top:119px;width:1660px;height:2px;"></div><div class="cb" style="left:44px;top:38px;width:40px;height:40px;"></div><span class="t s5" style="left:134.1px;top:43px;font-size:26.9px;color:#8b909c;letter-spacing:-0.76px">28.10.2025, 15:...</span><span class="t m" style="left:419.65px;top:43px;font-size:26.7px;color:#fff;letter-spacing:-0.68px">rechnung...</span><span class="t s5" style="left:635.8px;top:43px;font-size:26.9px;color:#8b909c;letter-spacing:-0.86px">Albert Ei...</span><span class="t s5" style="left:841.04px;top:43px;font-size:26.9px;color:#8b909c;letter-spacing:-0.8px">Deutsc...</span><span class="t s5" style="left:1021.94px;top:43px;font-size:26.9px;color:#8b909c;letter-spacing:-1px">Econo...</span><div class="pill" style="left:1202px;top:33px;width:418px;height:46px;background:#323743"></div><span class="t s5" style="left:1304.04px;top:43px;font-size:26.9px;color:#3ab8d3;letter-spacing:-0.4px">Druckvorbereitung</span><div style="left:0px;top:121px;width:1660px;height:126px;background:#2b2e39"></div><div class="rl" style="left:0px;top:247px;width:1660px;height:2px;"></div><div class="cb" style="left:44px;top:166px;width:40px;height:40px;border-color:#4b505e"></div><span class="t s5" style="left:134.1px;top:171px;font-size:26.9px;color:#8b909c;letter-spacing:-0.76px">28.10.2025, 15:...</span><span class="t m" style="left:419.65px;top:171px;font-size:26.7px;color:#fff;letter-spacing:-0.68px">rechnung...</span><span class="t s5" style="left:635.8px;top:171px;font-size:26.9px;color:#8b909c;letter-spacing:-0.86px">Albert Ei...</span><span class="t s5" style="left:841.04px;top:171px;font-size:26.9px;color:#8b909c;letter-spacing:-0.8px">Deutsc...</span><span class="t s5" style="left:1021.94px;top:171px;font-size:26.9px;color:#8b909c;letter-spacing:-1px">Econo...</span><div class="pill" style="left:1202px;top:161px;width:418px;height:46px;background:#72be8e"></div><span class="t m" style="left:1353.11px;top:171px;font-size:26.7px;color:#ffffff;letter-spacing:-0.73px">Versendet</span><div class="rl" style="left:0px;top:375px;width:1660px;height:2px;"></div><div class="cb" style="left:44px;top:294px;width:40px;height:40px;"></div><span class="t s5" style="left:134.1px;top:299px;font-size:26.9px;color:#8b909c;letter-spacing:-0.76px">28.10.2025, 15:...</span><span class="t m" style="left:419.65px;top:299px;font-size:26.7px;color:#fff;letter-spacing:-0.68px">rechnung...</span><span class="t s5" style="left:635.8px;top:299px;font-size:26.9px;color:#8b909c;letter-spacing:-0.86px">Albert Ei...</span><span class="t s5" style="left:841.04px;top:299px;font-size:26.9px;color:#8b909c;letter-spacing:-0.8px">Deutsc...</span><span class="t s5" style="left:1021.94px;top:299px;font-size:26.9px;color:#8b909c;letter-spacing:-1px">Econo...</span><div class="pill" style="left:1202px;top:289px;width:418px;height:46px;background:#323743"></div><span class="t s5" style="left:1352.93px;top:299px;font-size:26.9px;color:#6fc48c;letter-spacing:-0.8px">Versendet</span><div class="rl" style="left:0px;top:503px;width:1660px;height:2px;"></div><div class="cb" style="left:44px;top:422px;width:40px;height:40px;"></div><span class="t s5" style="left:134.1px;top:427px;font-size:26.9px;color:#8b909c;letter-spacing:-0.76px">28.10.2025, 15:...</span><span class="t m" style="left:419.65px;top:427px;font-size:26.7px;color:#fff;letter-spacing:-0.68px">rechnung...</span><span class="t s5" style="left:635.8px;top:427px;font-size:26.9px;color:#8b909c;letter-spacing:-0.86px">Albert Ei...</span><span class="t s5" style="left:841.04px;top:427px;font-size:26.9px;color:#8b909c;letter-spacing:-0.8px">Deutsc...</span><span class="t s5" style="left:1021.94px;top:427px;font-size:26.9px;color:#8b909c;letter-spacing:-1px">Econo...</span><div class="pill" style="left:1202px;top:417px;width:418px;height:46px;background:#323743"></div><span class="t s5" style="left:1352.93px;top:427px;font-size:26.9px;color:#6fc48c;letter-spacing:-0.8px">Versendet</span><div class="rl" style="left:0px;top:631px;width:1660px;height:2px;"></div><div class="cb" style="left:44px;top:550px;width:40px;height:40px;"></div><span class="t s5" style="left:134.1px;top:555px;font-size:26.9px;color:#8b909c;letter-spacing:-0.76px">28.10.2025, 15:...</span><span class="t m" style="left:419.65px;top:555px;font-size:26.7px;color:#fff;letter-spacing:-0.68px">rechnung...</span><span class="t s5" style="left:635.8px;top:555px;font-size:26.9px;color:#8b909c;letter-spacing:-0.86px">Albert Ei...</span><span class="t s5" style="left:841.04px;top:555px;font-size:26.9px;color:#8b909c;letter-spacing:-0.8px">Deutsc...</span><span class="t s5" style="left:1021.94px;top:555px;font-size:26.9px;color:#8b909c;letter-spacing:-1px">Econo...</span><div class="pill" style="left:1202px;top:545px;width:418px;height:46px;background:#323743"></div><span class="t s5" style="left:1337.32px;top:555px;font-size:26.9px;color:#f08389;letter-spacing:-0.34px">Unzustellbar</span><div class="rl" style="left:0px;top:759px;width:1660px;height:2px;"></div><div class="cb" style="left:44px;top:678px;width:40px;height:40px;"></div><span class="t s5" style="left:134.1px;top:683px;font-size:26.9px;color:#8b909c;letter-spacing:-0.76px">28.10.2025, 15:...</span><span class="t m" style="left:419.65px;top:683px;font-size:26.7px;color:#fff;letter-spacing:-0.68px">rechnung...</span><span class="t s5" style="left:633.64px;top:683px;font-size:26.9px;color:#8b909c;letter-spacing:-0.74px">Kaasvlin...</span><span class="t s5" style="left:841.04px;top:683px;font-size:26.9px;color:#8b909c;letter-spacing:-0.62px">Niederl...</span><span class="t s5" style="left:1022.35px;top:683px;font-size:26.9px;color:#8b909c">-</span><div class="pill" style="left:1202px;top:673px;width:418px;height:46px;background:#323743"></div><span class="t s5" style="left:1305.05px;top:683px;font-size:26.9px;color:#f2a03d;letter-spacing:-0.18px">Aktion erforderlich</span><div class="rl" style="left:0px;top:887px;width:1660px;height:2px;"></div><div class="cb" style="left:44px;top:806px;width:40px;height:40px;"></div><span class="t s5" style="left:134.1px;top:811px;font-size:26.9px;color:#8b909c;letter-spacing:-0.76px">28.10.2025, 15:...</span><span class="t m" style="left:419.65px;top:811px;font-size:26.7px;color:#fff;letter-spacing:-0.68px">rechnung...</span><span class="t s5" style="left:635.8px;top:811px;font-size:26.9px;color:#8b909c;letter-spacing:-1.17px">André va...</span><span class="t s5" style="left:841.04px;top:811px;font-size:26.9px;color:#8b909c;letter-spacing:-0.62px">Niederl...</span><span class="t s5" style="left:1022.35px;top:811px;font-size:26.9px;color:#8b909c">-</span><div class="pill" style="left:1202px;top:801px;width:418px;height:46px;background:#323743"></div><span class="t s5" style="left:1331.63px;top:811px;font-size:26.9px;color:#0b5cff;letter-spacing:-0.72px">Versandbereit</span><div class="rl" style="left:0px;top:1015px;width:1660px;height:2px;"></div><div class="cb" style="left:44px;top:934px;width:40px;height:40px;"></div><span class="t s5" style="left:134.1px;top:939px;font-size:26.9px;color:#8b909c;letter-spacing:-0.76px">28.10.2025, 15:...</span><span class="t m" style="left:421.33px;top:939px;font-size:26.7px;color:#fff;letter-spacing:-0.37px">validated...</span><span class="t s5" style="left:635.8px;top:939px;font-size:26.9px;color:#8b909c;letter-spacing:-0.97px">André v...</span><span class="t s5" style="left:841.04px;top:939px;font-size:26.9px;color:#8b909c;letter-spacing:-0.62px">Niederl...</span><span class="t s5" style="left:1022.93px;top:939px;font-size:26.9px;color:#8b909c;letter-spacing:-0.29px">Stand...</span><div class="pill" style="left:1202px;top:929px;width:418px;height:46px;background:#323743"></div><span class="t s5" style="left:1304.04px;top:939px;font-size:26.9px;color:#3ab8d3;letter-spacing:-0.4px">Druckvorbereitung</span></div><div style="left:536px;top:1485px;width:1660px;height:2px;background:#464c5a"></div><div style="left:1844px;top:629px;width:205px;height:50px;background:#0b5cff;border-radius:8px;box-shadow:0 6px 16px rgba(0,0,0,.55)"></div><svg style="left:1938px;top:678.5px" width="16" height="9" viewBox="0 0 16 9" ><path d="M0 0H16L8 8Z" fill="#0b5cff"/></svg><span class="t m" style="left:1867.83px;top:640px;font-size:26.7px;color:#fff;letter-spacing:-0.87px">Track &amp; Trace</span></div></main><section style="left:0;top:0;width:3023px;height:1645px"><span class="t b" style="left:2374.1px;top:218px;font-size:36.4px;color:#fff;transform:scaleX(0.9148)">Track &amp; Trace</span><div style="left:2286px;top:124px;width:737px;height:1378px;overflow:hidden"><svg style="left:130px;top:-124px" width="1" height="1" viewBox="0 0 1 1" ><path d="M0 358 V1506" stroke="#77788c" stroke-width="4" stroke-linecap="round" stroke-dasharray="0 8"/></svg><svg style="left:130px;top:224px" width="1" height="1" viewBox="0 0 1 1" ><circle r="9" stroke="#7c7d92" stroke-width="2" fill="#161922"/></svg><div style="left:176px;top:198px;width:165px;height:46px;border-radius:23px;background:#323743"></div><span class="t s5" style="left:200.13px;top:208px;font-size:26.9px;color:#6fc48c;letter-spacing:-0.79px">Versendet</span><div class="mask" style="left:118px;top:313px;width:24px;height:100px;"></div><div class="ic" style="left:92px;top:327px;width:72px;height:72px;background:#202a2b"></div><svg style="left:128px;top:363px" width="1" height="1" viewBox="0 0 1 1" ><path d="M-13 -1.7L-21.5 -8L18.3 -17L-0.6 18.8L-7 2.6L1 -3.6" stroke="#6fc48c" stroke-width="2.2" stroke-miterlimit="10"/></svg><div class="card" style="left:178px;top:264px;width:452px;height:198px;"></div><span class="t s5" style="left:211.7px;top:299px;font-size:26.9px;color:#77788c;letter-spacing:-0.36px">28.10.2025</span><span class="t s5" style="left:530.5px;top:299px;font-size:26.9px;color:#77788c;letter-spacing:-0.5px">15:53</span><span class="t b" style="left:212.07px;top:340px;font-size:26.4px;color:#fff;transform:scaleX(0.9198)">An den Postdienstleister</span><span class="t b" style="left:211.57px;top:369px;font-size:26.4px;color:#fff;transform:scaleX(0.9223)">übergeben</span><span class="t s5" style="left:211.14px;top:400px;font-size:26.9px;color:#77788c;letter-spacing:-0.23px">Printcenter</span><div class="mask" style="left:118px;top:526px;width:24px;height:100px;"></div><div class="ic" style="left:92px;top:540px;width:72px;height:72px;"></div><svg style="left:128px;top:576px" width="1" height="1" viewBox="0 0 1 1" ><g stroke="#0b5cff" stroke-width="2.7" stroke-linecap="round" stroke-linejoin="round"><circle cx="-13.8" cy="-9.3" r="7.8"/><circle cx="-13.8" cy="-9.3" r="3.2"/><circle cx="-13.8" cy="6.6" r="7.8"/><circle cx="-13.8" cy="6.6" r="3.2"/><path d="M-13.8 -17.1H8.2A7.8 7.8 0 0 1 8.2 -1.5H-13.8"/><path d="M8.2 -1.5C15 -0.5 19.8 5 20.9 13.2C21.2 15.4 20.3 16.6 18.3 16.6H3.2C0.8 16.6 -0.2 15.6 -0.6 13.2C-1.4 8.6 -3.2 5.2 -6.4 2.6"/><path d="M-13.8 14.4H-3.2"/></g></svg><div class="card" style="left:178px;top:492px;width:452px;height:168px;"></div><span class="t s5" style="left:211.7px;top:527px;font-size:26.9px;color:#77788c;letter-spacing:-0.36px">28.10.2025</span><span class="t s5" style="left:530.5px;top:527px;font-size:26.9px;color:#77788c;letter-spacing:-0.5px">15:53</span><span class="t b" style="left:211.95px;top:568px;font-size:26.4px;color:#fff;transform:scaleX(0.9273)">Zum Druck übermittelt</span><span class="t s5" style="left:211.14px;top:597px;font-size:26.9px;color:#77788c;letter-spacing:-0.46px">Pingen</span><div class="mask" style="left:118px;top:724px;width:24px;height:100px;"></div><div class="ic" style="left:92px;top:738px;width:72px;height:72px;"></div><svg style="left:128px;top:774px" width="1" height="1" viewBox="0 0 1 1" ><g stroke="#0b5cff" stroke-width="2.5" stroke-linecap="round" stroke-linejoin="round"><path d="M-20.3 4.4A20.7 20.7 0 0 1 15.6 -13.7"/><path d="M15.1 -21.2L15.9 -13.5L7.9 -12.8"/><path d="M20.3 -4.4A20.7 20.7 0 0 1 -15.6 13.7"/><path d="M-14.7 21.2L-15.9 13.5L-8.4 11.9"/></g></svg><div class="card" style="left:178px;top:690px;width:452px;height:168px;"></div><span class="t s5" style="left:211.7px;top:725px;font-size:26.9px;color:#77788c;letter-spacing:-0.36px">28.10.2025</span><span class="t s5" style="left:530.5px;top:725px;font-size:26.9px;color:#77788c;letter-spacing:-0.5px">15:53</span><span class="t b" style="left:211.05px;top:766px;font-size:26.4px;color:#fff;transform:scaleX(0.9237)">In Bearbeitung</span><span class="t s5" style="left:211.14px;top:795px;font-size:26.9px;color:#77788c;letter-spacing:-0.46px">Pingen</span><div class="mask" style="left:118px;top:922px;width:24px;height:100px;"></div><div class="ic" style="left:92px;top:936px;width:72px;height:72px;"></div><svg style="left:128px;top:972px" width="1" height="1" viewBox="0 0 1 1" ><path d="M-22 1.4L-8.8 14.4L22.3 -14.1" stroke="#0b5cff" stroke-width="2.5" stroke-linecap="round" stroke-linejoin="round"/></svg><div class="card" style="left:178px;top:888px;width:452px;height:168px;"></div><span class="t s5" style="left:211.7px;top:923px;font-size:26.9px;color:#77788c;letter-spacing:-0.36px">28.10.2025</span><span class="t s5" style="left:530.5px;top:923px;font-size:26.9px;color:#77788c;letter-spacing:-0.5px">15:53</span><span class="t b" style="left:212.51px;top:964px;font-size:26.4px;color:#fff;transform:scaleX(0.9312)">Versand akzeptiert</span><span class="t s5" style="left:211.14px;top:993px;font-size:26.9px;color:#77788c;letter-spacing:-0.46px">Pingen</span><div class="mask" style="left:118px;top:1120px;width:24px;height:100px;"></div><div class="ic" style="left:92px;top:1134px;width:72px;height:72px;"></div><svg style="left:128px;top:1170px" width="1" height="1" viewBox="0 0 1 1" ><g stroke="#0b5cff" stroke-width="2.8" stroke-linejoin="round"><path d="M10.5 -2.5V-9.7L0 -20.4H-18.7A3 3 0 0 0 -21.7 -17.4V17.4A3 3 0 0 0 -18.7 20.4H7.5A3 3 0 0 0 10.5 17.4V6.3"/><path d="M3.1 1.9H22M15.6 -4.7L22.4 1.9L15.6 8.5"/></g></svg><div class="card" style="left:178px;top:1086px;width:452px;height:168px;"></div><span class="t s5" style="left:211.7px;top:1121px;font-size:26.9px;color:#77788c;letter-spacing:-0.36px">28.10.2025</span><span class="t s5" style="left:530.5px;top:1121px;font-size:26.9px;color:#77788c;letter-spacing:-0.5px">15:53</span><span class="t b" style="left:212.07px;top:1162px;font-size:26.4px;color:#fff;transform:scaleX(0.9281)">Aufgegeben</span><span class="t s5" style="left:211.14px;top:1191px;font-size:26.9px;color:#77788c;letter-spacing:-0.46px">Pingen</span><div class="mask" style="left:118px;top:1318px;width:24px;height:100px;"></div><div class="ic" style="left:92px;top:1332px;width:72px;height:72px;"></div><svg style="left:128px;top:1368px" width="1" height="1" viewBox="0 0 1 1" ><g stroke="#0b5cff" stroke-width="2.9" stroke-linejoin="round" stroke-linecap="round"><path d="M-16.5 -2.6V-18.5A3 3 0 0 1 -13.5 -21.5H6.6L17.9 -9.9V18.5A3 3 0 0 1 14.9 21.5H-6"/><path d="M-17.4 8L-9.4 16.2L7 0"/></g></svg><div class="card" style="left:178px;top:1284px;width:452px;height:168px;"></div><span class="t s5" style="left:211.7px;top:1319px;font-size:26.9px;color:#77788c;letter-spacing:-0.36px">28.10.2025</span><span class="t s5" style="left:530.5px;top:1319px;font-size:26.9px;color:#77788c;letter-spacing:-0.5px">15:53</span><span class="t b" style="left:212.51px;top:1360px;font-size:26.4px;color:#fff;transform:scaleX(0.9188)">Validierung bestanden</span><span class="t s5" style="left:211.14px;top:1389px;font-size:26.9px;color:#77788c;letter-spacing:-0.46px">Pingen</span></div><div style="left:2286px;top:1502px;width:738px;height:2px;background:#343a47"></div><span class="t b" style="left:2584.41px;top:1559px;font-size:32.4px;color:#7a7b8f;transform:scaleX(0.9316)">Schließen</span></section><div style="left:0px;top:122px;width:3024px;height:2px;background:#343a47"></div><div style="left:446px;top:0px;width:2px;height:1646px;background:#343a47"></div><div style="left:2284px;top:124px;width:2px;height:1522px;background:#343a47"></div><div style="left:3023px;top:0;width:1px;height:1646px;background:#303237"></div></div></body></html>
